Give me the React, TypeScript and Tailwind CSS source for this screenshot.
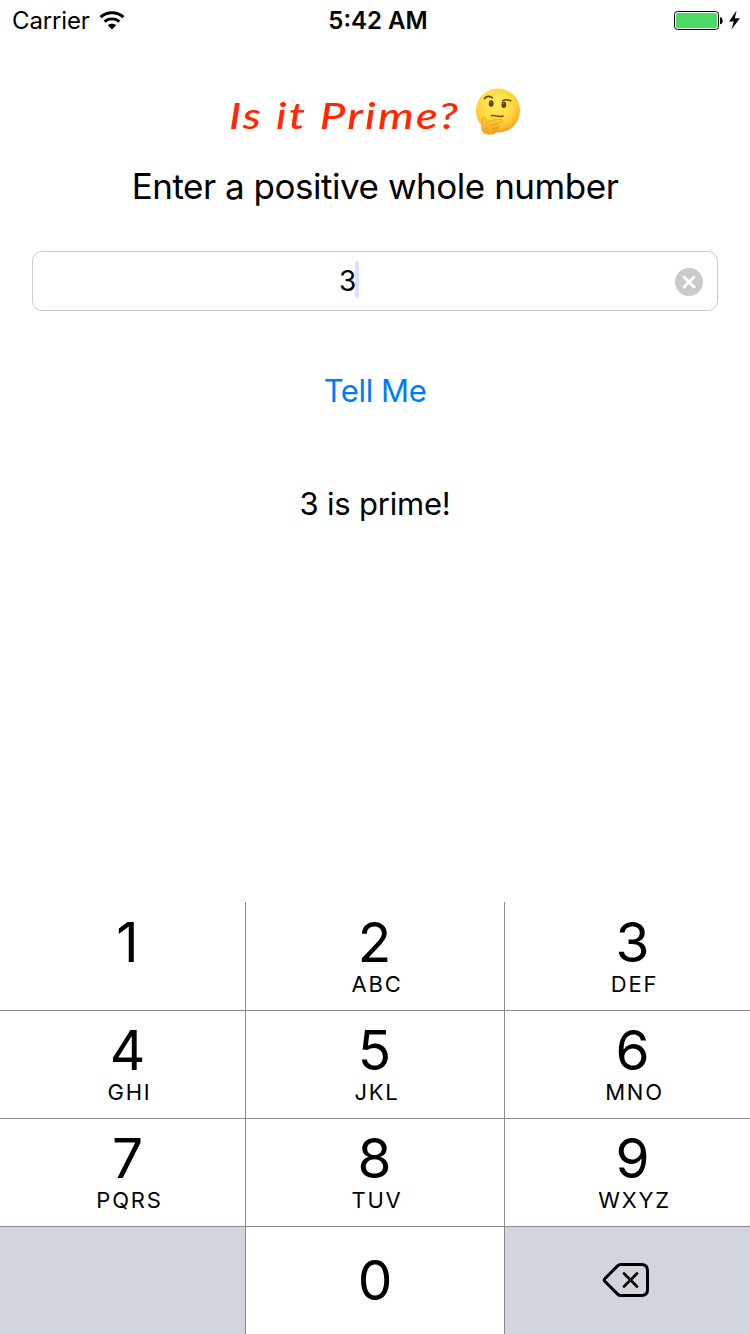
import React from "react";

type Key = { digit: string; letters?: string };

const rows: Key[][] = [
  [{ digit: "1" }, { digit: "2", letters: "ABC" }, { digit: "3", letters: "DEF" }],
  [{ digit: "4", letters: "GHI" }, { digit: "5", letters: "JKL" }, { digit: "6", letters: "MNO" }],
  [{ digit: "7", letters: "PQRS" }, { digit: "8", letters: "TUV" }, { digit: "9", letters: "WXYZ" }],
];

function WifiIcon() {
  return (
    <svg width="26" height="19" viewBox="0 0 26 19" fill="none" stroke="#000">
      <path d="M1.5 6.2C8 0.2 18 0.2 24.5 6.2" strokeWidth="3" />
      <path d="M5.6 10.6C9.8 6.9 16.2 6.9 20.4 10.6" strokeWidth="2.9" />
      <path d="M13 18.4L8.8 14.2C11 12.2 15 12.2 17.2 14.2Z" fill="#000" stroke="none" />
    </svg>
  );
}

function BatteryIcon() {
  return (
    <svg width="68" height="22" viewBox="0 0 68 22">
      <rect x="1.5" y="2.5" width="44" height="18" rx="3" fill="#fff" stroke="#000" />
      <rect x="3" y="4" width="41" height="15" rx="1.5" fill="#4cd964" />
      <path d="M47 8.2C50.6 8.2 50.6 15.2 47 15.2Z" fill="#000" />
      <path d="M63.6 1.6L56 12.6H60.8L58.4 20.6L67 9.2H61.8Z" fill="#000" />
    </svg>
  );
}

function ThinkingFace() {
  return (
    <svg width="46" height="48" viewBox="0 0 46 48" fill="none">
      <defs>
        <radialGradient id="face" cx="0.45" cy="0.35" r="0.66">
          <stop offset="0" stopColor="#fff05e" />
          <stop offset="0.6" stopColor="#ffd83c" />
          <stop offset="0.88" stopColor="#fbb82c" />
          <stop offset="1" stopColor="#eb941c" />
        </radialGradient>
        <linearGradient id="hand" x1="0" y1="0" x2="0" y2="1">
          <stop offset="0" stopColor="#ffd13b" />
          <stop offset="1" stopColor="#f3a01f" />
        </linearGradient>
      </defs>
      <circle cx="23" cy="22.5" r="22" fill="url(#face)" />
      <path d="M9.5 10.6C11.5 7.8 14.8 7.6 17.5 9.8" stroke="#6b3f0a" strokeWidth="1.7" strokeLinecap="round" />
      <path d="M27.5 12.6C30 11.4 33 11.4 35.8 12.9" stroke="#6b3f0a" strokeWidth="1.5" strokeLinecap="round" />
      <ellipse cx="16.2" cy="15.5" rx="2.4" ry="3.3" fill="#6b3f0a" />
      <ellipse cx="28.8" cy="16.7" rx="2.4" ry="3.2" fill="#6b3f0a" />
      <circle cx="15.9" cy="14.4" r="0.8" fill="#b77e30" />
      <circle cx="28.5" cy="15.6" r="0.8" fill="#b77e30" />
      <path d="M16.5 27.8C20 26.6 24 29.8 28 28" stroke="#7b460b" strokeWidth="1.6" strokeLinecap="round" />
      <path
        d="M7.7 29.5C9.3 28.3 10.6 29.7 10.8 31.5L11.3 34.5C15 32.5 20 31.2 25.5 31.2C28 31.2 28.2 33.7 26 34.3L20.5 36C23.7 36 24.8 38.3 22.8 39.8C23.7 41.4 22.8 42.6 21.3 43C20.8 45.5 18.5 46.2 15.5 46.2C10.5 46.5 7.2 44.5 6.7 40.5Z"
        fill="url(#hand)"
        stroke="#e8981f"
        strokeWidth="0.7"
      />
      <path d="M20.5 36L16 37.6M22.8 39.8L17.5 40.5M21.3 43L17.5 43" stroke="#d98a1d" strokeWidth="0.8" />
    </svg>
  );
}

function ClearIcon() {
  return (
    <svg width="28" height="28" viewBox="0 0 28 28">
      <circle cx="14" cy="14" r="14" fill="#cacaca" />
      <path d="M9 9L19 19M19 9L9 19" stroke="#fff" strokeWidth="2.8" strokeLinecap="round" />
    </svg>
  );
}

function DeleteIcon() {
  return (
    <svg width="48" height="36" viewBox="0 0 48 36" fill="none" stroke="#000" strokeWidth="3" strokeLinecap="round" strokeLinejoin="round">
      <path d="M19 2.5H39.5Q45.5 2.5 45.5 8.5V27.5Q45.5 33.5 39.5 33.5H19Q17 33.5 15.6 32.1L2.8 19.3Q1.5 18 2.8 16.7L15.6 3.9Q17 2.5 19 2.5Z" />
      <path d="M22 11.5L35 24.5M35 11.5L22 24.5" strokeWidth="2.7" />
    </svg>
  );
}

function KeyButton({ digit, letters, column, firstRow }: Key & { column: number; firstRow: boolean }) {
  return (
    <button
      className={`flex flex-col items-center bg-white ${firstRow ? "pt-[12px]" : "pt-[11px]"} ${column === 1 ? "" : "pl-[10px]"}`}
    >
      <span className={`text-[55px] leading-[56px] ${column === 1 ? "pr-[1px]" : ""}`}>{digit}</span>
      {letters && <span className="mt-[3px] pl-[4px] text-[22px] leading-[22px] tracking-[1.8px]">{letters}</span>}
    </button>
  );
}

export default function App() {
  return (
    <div className="flex h-[1334px] w-[750px] flex-col bg-white font-['Inter',sans-serif] text-black">
      <header className="grid h-[41px] grid-cols-3 items-center pl-[12px] pr-[9px]">
        <div className="flex items-center gap-[9px] text-[24px] leading-[41px] tracking-[-0.15px]">
          Carrier <WifiIcon />
        </div>
        <div className="pl-[3px] text-center text-[24px] font-semibold leading-[41px]">5:42 AM</div>
        <div className="flex justify-end pb-[2px]"><BatteryIcon /></div>
      </header>

      <main className="flex flex-1 flex-col items-center">
        <h1 className="mt-[47px] flex h-[48px] items-center gap-[14px]">
          <span className="w-[232px] origin-left scale-x-[1.225] whitespace-nowrap pt-[6px] font-['Lato',cursive] text-[37px] font-medium italic leading-[42px] tracking-[1.8px] text-[#ff2600]">
            Is it Prime?
          </span>
          <ThinkingFace />
        </h1>
        <p className="mt-[30px] text-[35px] leading-[40px] tracking-[-0.47px]">Enter a positive whole number</p>
        <div className="mt-[45px] flex h-[60px] w-[686px] items-center rounded-[10px] border border-[#cbcbcb] pr-[14px]">
          <div className="flex flex-1 items-center justify-center pr-[10px]">
            <span className="text-[28px] leading-[58px] tracking-[-1.5px]">3</span>
            <span className="mb-[3px] h-[37px] w-[4px] rounded-full bg-[#d6e0ff]" />
          </div>
          <button className="pt-[2px]"><ClearIcon /></button>
        </div>
        <button className="mt-[60px] text-[31px] leading-[40px] tracking-[-0.4px] text-[#007aff]">Tell Me</button>
        <p className="mt-[73px] text-[31px] leading-[40px] tracking-[-0.2px]">3 is prime!</p>
      </main>

      <section className="grid h-[432px] grid-cols-[245px_258px_245px] grid-rows-[108px_107px_107px_107px] gap-px bg-[#8c8c8c]">
        {rows.flat().map((key, index) => (
          <KeyButton key={key.digit} {...key} column={index % 3} firstRow={index < 3} />
        ))}
        <div className="bg-[#d2d5dd]" />
        <button className="bg-white text-[55px] leading-[107px]">0</button>
        <button className="flex items-center justify-center bg-[#d2d5dd] pb-[2px] pr-[3px]"><DeleteIcon /></button>
      </section>
    </div>
  );
}
